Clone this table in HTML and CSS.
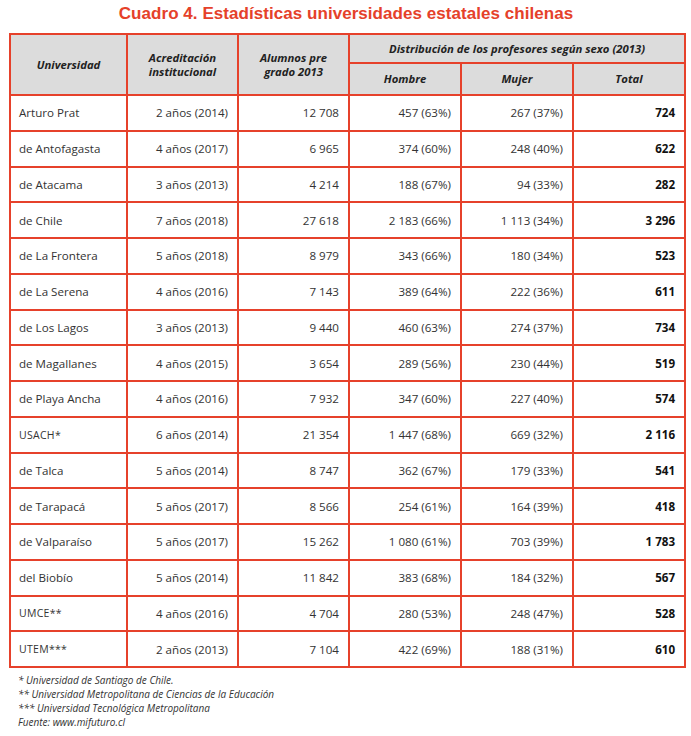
FILE: index.html
```html
<!DOCTYPE html>
<html lang="es">
<head>
<meta charset="utf-8">
<link rel="stylesheet" href="styles.css">
</head>
<body>
<div class="page">
  <h1 class="title">Cuadro 4. Estadísticas universidades estatales chilenas</h1>
  <table class="tbl">
    <colgroup>
      <col class="c1"><col class="c2"><col class="c3"><col class="c4"><col class="c5"><col class="c6">
    </colgroup>
    <thead>
      <tr class="h1">
        <th rowspan="2">Universidad</th>
        <th rowspan="2">Acreditación<br>institucional</th>
        <th rowspan="2">Alumnos pre<br>grado 2013</th>
        <th colspan="3">Distribución de los profesores según sexo (2013)</th>
      </tr>
      <tr class="h2">
        <th>Hombre</th>
        <th>Mujer</th>
        <th>Total</th>
      </tr>
    </thead>
    <tbody>
      <tr><td>Arturo Prat</td><td>2 años (2014)</td><td>12 708</td><td>457 (63%)</td><td>267 (37%)</td><td class="b">724</td></tr>
      <tr><td>de Antofagasta</td><td>4 años (2017)</td><td>6 965</td><td>374 (60%)</td><td>248 (40%)</td><td class="b">622</td></tr>
      <tr><td>de Atacama</td><td>3 años (2013)</td><td>4 214</td><td>188 (67%)</td><td>94 (33%)</td><td class="b">282</td></tr>
      <tr><td>de Chile</td><td>7 años (2018)</td><td>27 618</td><td>2 183 (66%)</td><td>1 113 (34%)</td><td class="b">3 296</td></tr>
      <tr><td>de La Frontera</td><td>5 años (2018)</td><td>8 979</td><td>343 (66%)</td><td>180 (34%)</td><td class="b">523</td></tr>
      <tr><td>de La Serena</td><td>4 años (2016)</td><td>7 143</td><td>389 (64%)</td><td>222 (36%)</td><td class="b">611</td></tr>
      <tr><td>de Los Lagos</td><td>3 años (2013)</td><td>9 440</td><td>460 (63%)</td><td>274 (37%)</td><td class="b">734</td></tr>
      <tr><td>de Magallanes</td><td>4 años (2015)</td><td>3 654</td><td>289 (56%)</td><td>230 (44%)</td><td class="b">519</td></tr>
      <tr><td>de Playa Ancha</td><td>4 años (2016)</td><td>7 932</td><td>347 (60%)</td><td>227 (40%)</td><td class="b">574</td></tr>
      <tr><td class="sm">USACH*</td><td>6 años (2014)</td><td>21 354</td><td>1 447 (68%)</td><td>669 (32%)</td><td class="b">2 116</td></tr>
      <tr><td>de Talca</td><td>5 años (2014)</td><td>8 747</td><td>362 (67%)</td><td>179 (33%)</td><td class="b">541</td></tr>
      <tr><td>de Tarapacá</td><td>5 años (2017)</td><td>8 566</td><td>254 (61%)</td><td>164 (39%)</td><td class="b">418</td></tr>
      <tr><td>de Valparaíso</td><td>5 años (2017)</td><td>15 262</td><td>1 080 (61%)</td><td>703 (39%)</td><td class="b">1 783</td></tr>
      <tr><td>del Biobío</td><td>5 años (2014)</td><td>11 842</td><td>383 (68%)</td><td>184 (32%)</td><td class="b">567</td></tr>
      <tr><td class="sm">UMCE**</td><td>4 años (2016)</td><td>4 704</td><td>280 (53%)</td><td>248 (47%)</td><td class="b">528</td></tr>
      <tr><td class="sm">UTEM***</td><td>2 años (2013)</td><td>7 104</td><td>422 (69%)</td><td>188 (31%)</td><td class="b">610</td></tr>
    </tbody>
  </table>
  <div class="notes">
    <p>* Universidad de Santiago de Chile.</p>
    <p>** Universidad Metropolitana de Ciencias de la Educación</p>
    <p>*** Universidad Tecnológica Metropolitana</p>
    <p>Fuente: www.mifuturo.cl</p>
  </div>
</div>
</body>
</html>
```
FILE: styles.css
```css
* { box-sizing: border-box; }
html, body { margin: 0; padding: 0; background: #fff; }
body { font-family: "Open Sans", "Liberation Sans", sans-serif; color: #2a2a2a; }
.page { width: 691px; padding: 3px 0 0 9px; }
.title {
  margin: 0;
  width: 674px;
  text-align: center;
  font-family: "Liberation Sans", Arial, sans-serif;
  font-size: 17px;
  line-height: 22px;
  font-weight: 700;
  color: #e5412a;
  letter-spacing: 0.05px;
}
.tbl {
  margin-top: 8px;
  width: 675px;
  border-collapse: collapse;
  table-layout: fixed;
  border: 2px solid #e6412b;
}
.c1 { width: 117px; }
.c2 { width: 111px; }
.c3 { width: 111px; }
.c4 { width: 112px; }
.c5 { width: 112px; }
.c6 { width: 112px; }
.tbl th, .tbl td { border: 2px solid #e6412b; }
.tbl th {
  background: #dcdcdc;
  font-style: italic;
  font-weight: 700;
  font-size: 11.3px;
  line-height: 14px;
  color: #222;
  text-align: center;
  padding: 0 4px;
}
.h1 th { height: 29px; }
.h2 th { height: 32px; }
.tbl td {
  height: 35.75px;
  font-size: 11.6px;
  color: #333;
  text-align: right;
  padding: 0 9px 0 8px;
  white-space: nowrap;
}
.tbl td:first-child { text-align: left; }
.tbl td.sm { font-size: 10.5px; letter-spacing: 0.3px; }
.tbl td.b { font-weight: 700; color: #111; }
.notes { padding: 5px 0 0 9px; }
.notes p {
  margin: 0;
  font-size: 10px;
  line-height: 14px;
  font-style: italic;
  color: #333;
}
```
